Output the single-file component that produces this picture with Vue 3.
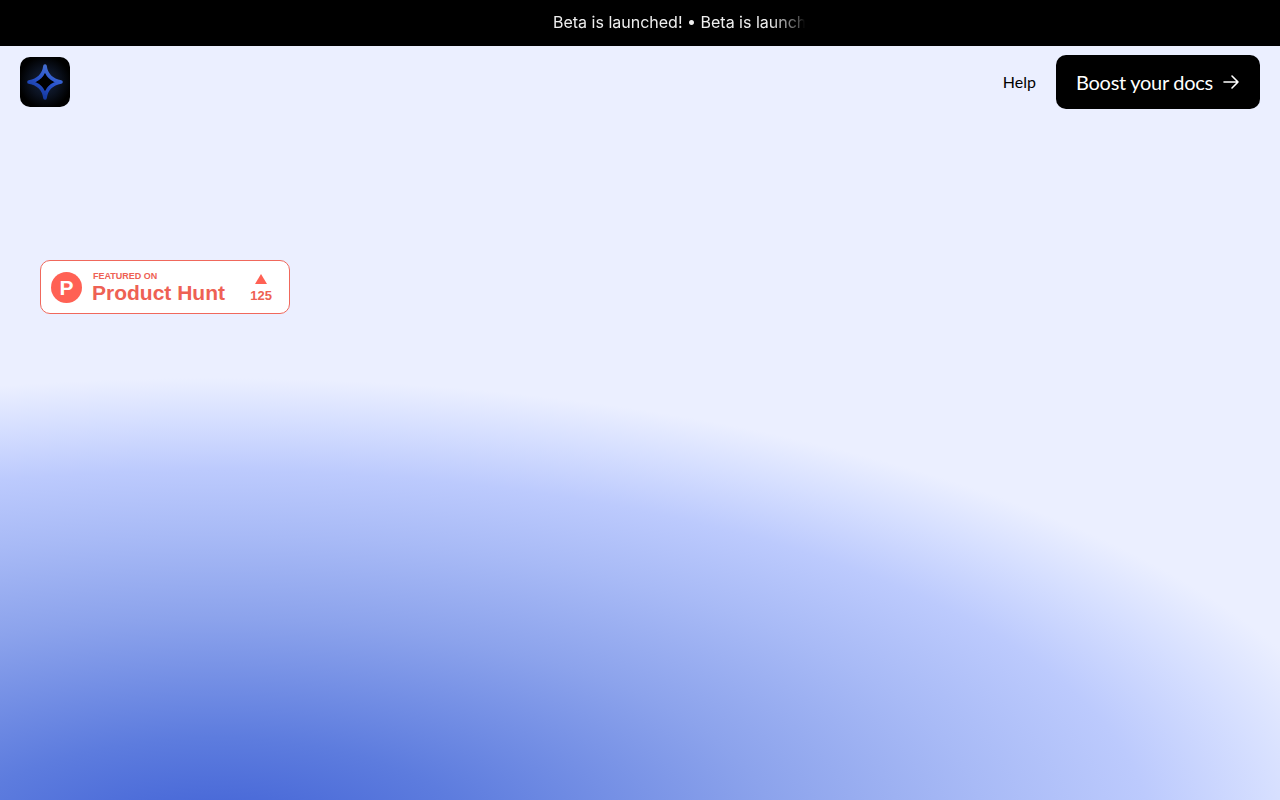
<template>
  <div class="page">
    <div class="glow"></div>

    <div class="banner">
      <div class="ticker">
        <span>{{ tickerText }}</span>
      </div>
    </div>

    <header class="header">
      <a class="logo" href="#">
        <svg width="50" height="50" viewBox="0 0 50 50">
          <defs>
            <radialGradient id="logoBg" cx="50%" cy="50%" r="52%">
              <stop offset="0%" stop-color="#16233f" />
              <stop offset="55%" stop-color="#0b1220" />
              <stop offset="100%" stop-color="#000" />
            </radialGradient>
            <linearGradient id="logoStar" x1="0.8" y1="0" x2="0.3" y2="1">
              <stop offset="0%" stop-color="#4a74cf" />
              <stop offset="45%" stop-color="#2c56cf" />
              <stop offset="100%" stop-color="#12359a" />
            </linearGradient>
            <filter id="logoSoft"><feGaussianBlur stdDeviation="0.500" /></filter>
          </defs>
          <rect width="50" height="50" rx="10" fill="url(#logoBg)" />
          <path
            d="M25 9 C26 17 30 23 41 25 C30 27 26 33 25 41 C24 33 20 27 9 25 C20 23 24 17 25 9 Z"
            fill="#000"
            stroke="url(#logoStar)"
            stroke-width="3.600"
            stroke-linejoin="round"
            filter="url(#logoSoft)"
          />
        </svg>
      </a>
      <nav class="nav">
        <a class="help" href="#">Help</a>
        <a class="boost" href="#">
          Boost your docs
          <svg width="18" height="18" viewBox="0 0 18 18" fill="none" stroke="#fff" stroke-width="1.600" stroke-linecap="round" stroke-linejoin="round">
            <path d="M2 9 H16 M10 3 L16 9 L10 15" />
          </svg>
        </a>
      </nav>
    </header>

    <main class="content">
      <a class="ph-badge" href="#">
        <span class="ph-logo">P</span>
        <span class="ph-text">
          <small>FEATURED ON</small>
          <strong>Product Hunt</strong>
        </span>
        <span class="ph-votes">
          <i class="ph-arrow"></i>
          <b>{{ votes }}</b>
        </span>
      </a>
    </main>
  </div>
</template>

<script setup>
const tickerText = 'Beta is launched! • Beta is launched!';
const votes = 125;
</script>

<style>
html, body {
  margin: 0;
  background: #ebefff;
}
</style>

<style scoped>
.page {
  position: relative;
  width: 100%;
  height: 800px;
  overflow: hidden;
  background: #ebefff;
}

.glow {
  position: absolute;
  inset: 0;
  background: radial-gradient(1170px 462px at 215px 840px, #3f60d5 0%, #5d7cde 22%, #8ca3ec 48%, #a8baf6 66%, #bccafd 80%, #d6dfff 91%, #ebefff 100%);
}

.banner {
  position: relative;
  height: 46px;
  background: #000;
  display: flex;
  justify-content: center;
}

.ticker {
  width: 252px;
  padding-left: 78px;
  overflow: hidden;
  white-space: nowrap;
  color: #eee;
  font: 400 16px/44px Inter, sans-serif;
  -webkit-mask-image: linear-gradient(to right, #000 89%, rgba(0, 0, 0, 0.35) 98%, transparent 100%);
  mask-image: linear-gradient(to right, #000 89%, rgba(0, 0, 0, 0.35) 98%, transparent 100%);
}

.header {
  position: relative;
  display: flex;
  justify-content: space-between;
  align-items: center;
  padding: 9px 20px;
}

.logo {
  display: block;
  width: 50px;
  height: 50px;
}

.nav {
  display: flex;
  align-items: center;
  gap: 20px;
}

.help {
  color: #000;
  text-decoration: none;
  font: 400 16px/20px Lato, sans-serif;
  margin-top: -1px;
}

.boost {
  display: flex;
  align-items: center;
  gap: 9px;
  height: 54px;
  padding: 0 20px;
  box-sizing: border-box;
  border-radius: 10px;
  background: #000;
  color: #fff;
  text-decoration: none;
  font: 400 20px Lato, sans-serif;
  letter-spacing: -0.28px;
}

.content {
  position: relative;
  padding: 142px 40px 0;
}

.ph-badge {
  display: flex;
  align-items: center;
  width: 250px;
  height: 54px;
  box-sizing: border-box;
  padding: 0 17px 0 10px;
  border: 1px solid #f0685c;
  border-radius: 10px;
  background: #fff;
  color: #ee6154;
  text-decoration: none;
  font-family: "Liberation Sans", Arial, sans-serif;
}

.ph-logo {
  width: 31px;
  height: 31px;
  border-radius: 50%;
  background: #ff6154;
  color: #fff;
  font-size: 21px;
  font-weight: 700;
  line-height: 31px;
  text-align: center;
}

.ph-text {
  display: flex;
  flex-direction: column;
  margin-left: 10px;
  flex: 1;
}

.ph-text small {
  padding-left: 1px;
  font-size: 9px;
  font-weight: 700;
  line-height: 10px;
}

.ph-text strong {
  font-size: 21px;
  font-weight: 700;
  line-height: 23px;
}

.ph-votes {
  display: flex;
  flex-direction: column;
  align-items: center;
  gap: 5px;
  margin-top: 3px;
}

.ph-arrow {
  width: 0;
  height: 0;
  border-left: 6px solid transparent;
  border-right: 6px solid transparent;
  border-bottom: 10px solid #ff6154;
}

.ph-votes b {
  font-size: 13px;
  line-height: 14px;
}
</style>
